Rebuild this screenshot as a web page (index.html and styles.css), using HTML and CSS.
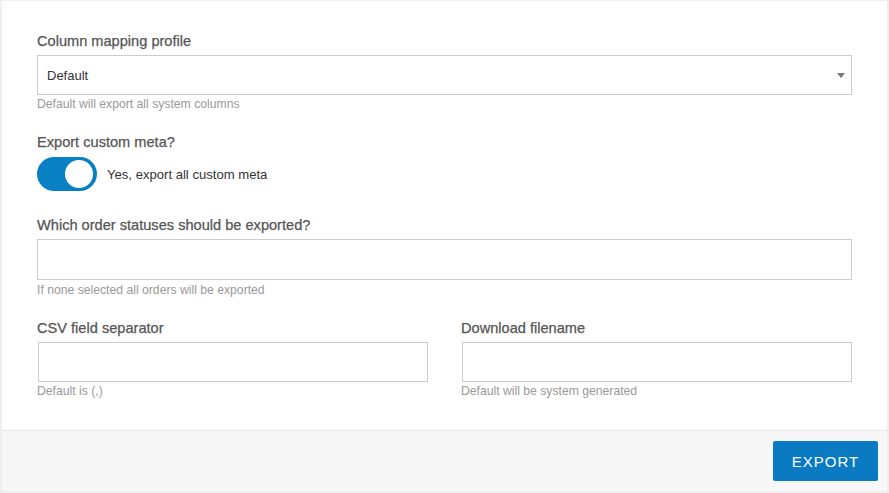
FILE: index.html
```html
<!DOCTYPE html>
<html lang="en">
<head>
    <meta charset="UTF-8">
    <title>Export orders</title>
    <link rel="stylesheet" href="styles.css">
</head>
<body>
    <div class="card">
        <div class="card-body">
            <!-- column mapping -->
            <div class="field">
                <label class="label">Column mapping profile</label>
                <div class="select">
                    <span>Default</span>
                    <span class="caret"></span>
                </div>
                <div class="hint">Default will export all system columns</div>
            </div>

            <!-- custom meta toggle -->
            <div class="field field-toggle">
                <label class="label">Export custom meta?</label>
                <div class="toggle-row">
                    <div class="toggle"><span class="knob"></span></div>
                    <span class="toggle-text">Yes, export all custom meta</span>
                </div>
            </div>

            <div class="field">
                <label class="label">Which order statuses should be exported?</label>
                <div class="input input-tall"></div>
                <div class="hint hint-low">If none selected all orders will be exported</div>
            </div>

            <div class="row">
                <div class="field col">
                    <label class="label">CSV field separator</label>
                    <div class="input"></div>
                    <div class="hint">Default is (,)</div>
                </div>
                <div class="field col">
                    <label class="label">Download filename</label>
                    <div class="input"></div>
                    <div class="hint">Default will be system generated</div>
                </div>
            </div>
        </div>

        <div class="card-footer">
            <button class="btn">EXPORT</button>
        </div>
    </div>
</body>
</html>
```

FILE: styles.css
```css
/* base */
body {
    margin: 0;
    padding: 1px 2px 2px 2px;
    background-color: #efefef;
    font-family: 'Liberation Sans', Arial, sans-serif;
    color: #333;
}

.card {
    background-color: #fff;
    height: 490px;
    display: flex;
    flex-direction: column;
}

.card-body {
    flex: 1;
    padding: 30px 35px 0 35px;
}

/* form fields */
.field {
    margin-bottom: 19px;
}

.field-toggle {
    margin-bottom: 24px;
}

.label {
    display: block;
    font-size: 14.6px;
    line-height: 20px;
    color: #555;
    margin-bottom: 4px;
    -webkit-text-stroke: 0.25px #555;
}

.select,
.input {
    box-sizing: border-box;
    height: 40px;
    border: 1px solid #ccc;
    background: #fff;
}

.input-tall {
    height: 41px;
}

.select {
    display: flex;
    align-items: center;
    justify-content: space-between;
    padding: 0 6px 0 9px;
    font-size: 13px;
    color: #333;
}

.caret {
    width: 0;
    height: 0;
    border-left: 4px solid transparent;
    border-right: 4px solid transparent;
    border-top: 5px solid #777;
    margin-top: 1px;
}

.hint {
    font-size: 12.2px;
    line-height: 18px;
    color: #999;
}

.hint-low {
    margin-top: 1px;
}

/* toggle */
.toggle-row {
    display: flex;
    align-items: center;
    height: 34px;
    margin-top: 5px;
}

.toggle {
    position: relative;
    width: 60px;
    height: 34px;
    border-radius: 17px;
    background-color: #0a80c4;
}

.knob {
    position: absolute;
    top: 3px;
    right: 4px;
    width: 28px;
    height: 28px;
    border-radius: 50%;
    background-color: #fff;
}

.toggle-text {
    margin-left: 10px;
    font-size: 13.1px;
    color: #333;
}

/* two columns */
.row {
    display: flex;
    gap: 33px;
}

.col {
    flex: 1;
}

.col .input {
    margin-left: 1px;
}

/* footer */
.card-footer {
    height: 50px;
    border-top: 1px solid #e6e6e6;
    background-color: #f7f7f7;
    display: flex;
    justify-content: flex-end;
    align-items: flex-start;
    padding: 10px 9px 0 0;
}

.btn {
    width: 105px;
    height: 40px;
    border: none;
    border-radius: 2px;
    background-color: #0a7bc2;
    color: #fff;
    font-family: 'Liberation Sans', Arial, sans-serif;
    font-size: 15px;
    letter-spacing: 1px;
    cursor: pointer;
}
```
